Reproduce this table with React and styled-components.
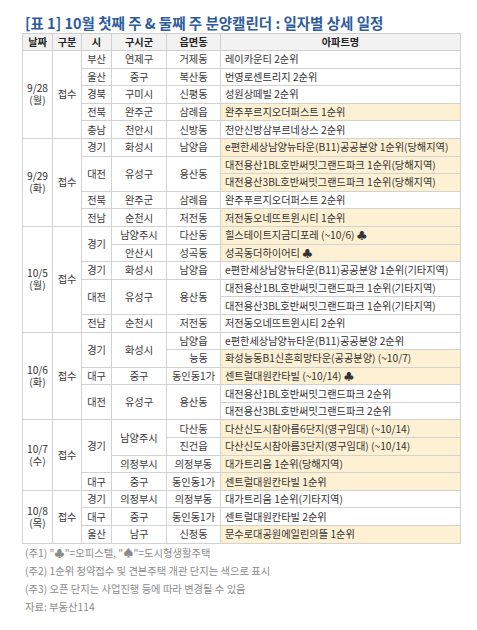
import React from 'react'
import styled, { createGlobalStyle } from 'styled-components'

const GlobalStyle = createGlobalStyle`
    body {
        margin: 0;
        background: #ffffff;
        font-family: "Noto Sans CJK KR", "Noto Sans", sans-serif;
    }
`;

const Page = styled.div`
    padding: 14px 0 0 22px;
    width: 439px;
`;

const Title = styled.h1`
    margin: 0 0 1px;
    padding-left: 3px;
    font-size: 14.5px;
    line-height: 18px;
    font-weight: 700;
    color: #2d5b9e;
    white-space: nowrap;
`;

const Table = styled.table`
    width: 439px;
    border-collapse: collapse;
    table-layout: fixed;
    border: 1px solid #c4c4c4;
`;

const HeadCell = styled.th`
    height: 16px;
    padding: 0;
    background: #f2f2f2;
    border: 1px solid #cfcfcf;
    font-size: 10.2px;
    font-weight: 700;
    color: #222;
    text-align: center;
    line-height: 14px;
`;

const Cell = styled.td`
    height: 16.6px;
    padding: 0 ${p => (p.$align === 'right' ? '12px' : '3px')} 0 3px;
    border: 1px solid #d2d2d2;
    font-size: 10.2px;
    line-height: 14px;
    color: #3a3a3a;
    text-align: ${p => p.$align || 'center'};
    white-space: nowrap;
    overflow: hidden;
    background: ${p => (p.$hl ? '#fdf0d3' : '#ffffff')};
`;

const AptCell = styled(Cell)`
    text-align: left;
    padding-left: 4px;
    color: #333;
`;

const DateCell = styled(Cell)`
    line-height: 12px;
    color: #333;
    white-space: normal;
`;

const Notes = styled.div`
    padding-left: 3px;
`;

const Note = styled.p`
    margin: 0;
    font-size: 10.3px;
    line-height: 18px;
    color: #8c8c8c;
    white-space: nowrap;
`;

const c = (t, rs = 1, align) => ({ t, rs, align });

const groups = [
    {
        date: '9/28', day: '월', rows: [
            { cells: [c('부산'), c('연제구'), c('거제동')], apt: '레이카운티 2순위' },
            { cells: [c('울산'), c('중구'), c('복산동')], apt: '번영로센트리지 2순위' },
            { cells: [c('경북'), c('구미시'), c('신평동')], apt: '성원상떼빌 2순위' },
            { cells: [c('전북'), c('완주군'), c('삼례읍')], apt: '완주푸르지오더퍼스트 1순위', hl: true },
            { cells: [c('충남'), c('천안시'), c('신방동')], apt: '천안신방삼부르네상스 2순위' },
        ],
    },
    {
        date: '9/29', day: '화', rows: [
            { cells: [c('경기'), c('화성시'), c('남양읍')], apt: 'e편한세상남양뉴타운(B11)공공분양 1순위(당해지역)', hl: true },
            { cells: [c('대전', 2), c('유성구', 2), c('용산동', 2)], apt: '대전용산1BL호반써밋그랜드파크 1순위(당해지역)', hl: true },
            { cells: [], apt: '대전용산3BL호반써밋그랜드파크 1순위(당해지역)', hl: true },
            { cells: [c('전북'), c('완주군'), c('삼례읍')], apt: '완주푸르지오더퍼스트 2순위' },
            { cells: [c('전남'), c('순천시'), c('저전동')], apt: '저전동오네뜨트윈시티 1순위', hl: true },
        ],
    },
    {
        date: '10/5', day: '월', rows: [
            { cells: [c('경기', 2), c('남양주시'), c('다산동')], apt: '힐스테이트지금디포레 (~10/6) ♣', hl: true },
            { cells: [c('안산시'), c('성곡동')], apt: '성곡동더하이어티 ♣', hl: true },
            { cells: [c('경기'), c('화성시'), c('남양읍')], apt: 'e편한세상남양뉴타운(B11)공공분양 1순위(기타지역)' },
            { cells: [c('대전', 2), c('유성구', 2), c('용산동', 2)], apt: '대전용산1BL호반써밋그랜드파크 1순위(기타지역)' },
            { cells: [], apt: '대전용산3BL호반써밋그랜드파크 1순위(기타지역)' },
            { cells: [c('전남'), c('순천시'), c('저전동')], apt: '저전동오네뜨트윈시티 2순위' },
        ],
    },
    {
        date: '10/6', day: '화', rows: [
            { cells: [c('경기', 2), c('화성시', 2), c('남양읍')], apt: 'e편한세상남양뉴타운(B11)공공분양 2순위' },
            { cells: [c('능동', 1, 'right')], apt: '화성능동B1신혼희망타운(공공분양) (~10/7)', hl: true },
            { cells: [c('대구'), c('중구'), c('동인동1가')], apt: '센트럴대원칸타빌 (~10/14) ♣', hl: true },
            { cells: [c('대전', 2), c('유성구', 2), c('용산동', 2)], apt: '대전용산1BL호반써밋그랜드파크 2순위' },
            { cells: [], apt: '대전용산3BL호반써밋그랜드파크 2순위' },
        ],
    },
    {
        date: '10/7', day: '수', rows: [
            { cells: [c('경기', 3), c('남양주시', 2), c('다산동')], apt: '다산신도시참아름6단지(영구임대) (~10/14)', hl: true },
            { cells: [c('진건읍')], apt: '다산신도시참아름3단지(영구임대) (~10/14)', hl: true },
            { cells: [c('의정부시'), c('의정부동')], apt: '대가트리움 1순위(당해지역)', hl: true },
            { cells: [c('대구'), c('중구'), c('동인동1가')], apt: '센트럴대원칸타빌 1순위', hl: true },
        ],
    },
    {
        date: '10/8', day: '목', rows: [
            { cells: [c('경기'), c('의정부시'), c('의정부동')], apt: '대가트리움 1순위(기타지역)' },
            { cells: [c('대구'), c('중구'), c('동인동1가')], apt: '센트럴대원칸타빌 2순위' },
            { cells: [c('울산'), c('남구'), c('신정동')], apt: '문수로대공원에일린의뜰 1순위', hl: true },
        ],
    },
];

function App() {
    return (
        <Page>
            <GlobalStyle />
            <Title>[표 1] 10월 첫째 주 &amp; 둘째 주 분양캘린더 : 일자별 상세 일정</Title>
            <Table>
                <colgroup>
                    <col style={{ width: 30 }} />
                    <col style={{ width: 29 }} />
                    <col style={{ width: 30 }} />
                    <col style={{ width: 55 }} />
                    <col style={{ width: 54 }} />
                    <col />
                </colgroup>
                <thead>
                    <tr>
                        <HeadCell>날짜</HeadCell>
                        <HeadCell>구분</HeadCell>
                        <HeadCell>시</HeadCell>
                        <HeadCell>구시군</HeadCell>
                        <HeadCell>읍면동</HeadCell>
                        <HeadCell>아파트명</HeadCell>
                    </tr>
                </thead>
                <tbody>
                    {groups.map(g =>
                        g.rows.map((r, i) => (
                            <tr key={g.date + i}>
                                {i === 0 && (
                                    <>
                                        <DateCell rowSpan={g.rows.length}>
                                            {g.date}<br />({g.day})
                                        </DateCell>
                                        <Cell rowSpan={g.rows.length}>접수</Cell>
                                    </>
                                )}
                                {r.cells.map((cell, j) => (
                                    <Cell key={j} rowSpan={cell.rs} $align={cell.align}>{cell.t}</Cell>
                                ))}
                                <AptCell $hl={r.hl}>{r.apt}</AptCell>
                            </tr>
                        ))
                    )}
                </tbody>
            </Table>
            <Notes>
                <Note>(주1) "♣"=오피스텔, "♠"=도시형생활주택</Note>
                <Note>(주2) 1순위 청약접수 및 견본주택 개관 단지는 색으로 표시</Note>
                <Note>(주3) 오픈 단지는 사업진행 등에 따라 변경될 수 있음</Note>
                <Note>자료: 부동산114</Note>
            </Notes>
        </Page>
    )
}

export default App
